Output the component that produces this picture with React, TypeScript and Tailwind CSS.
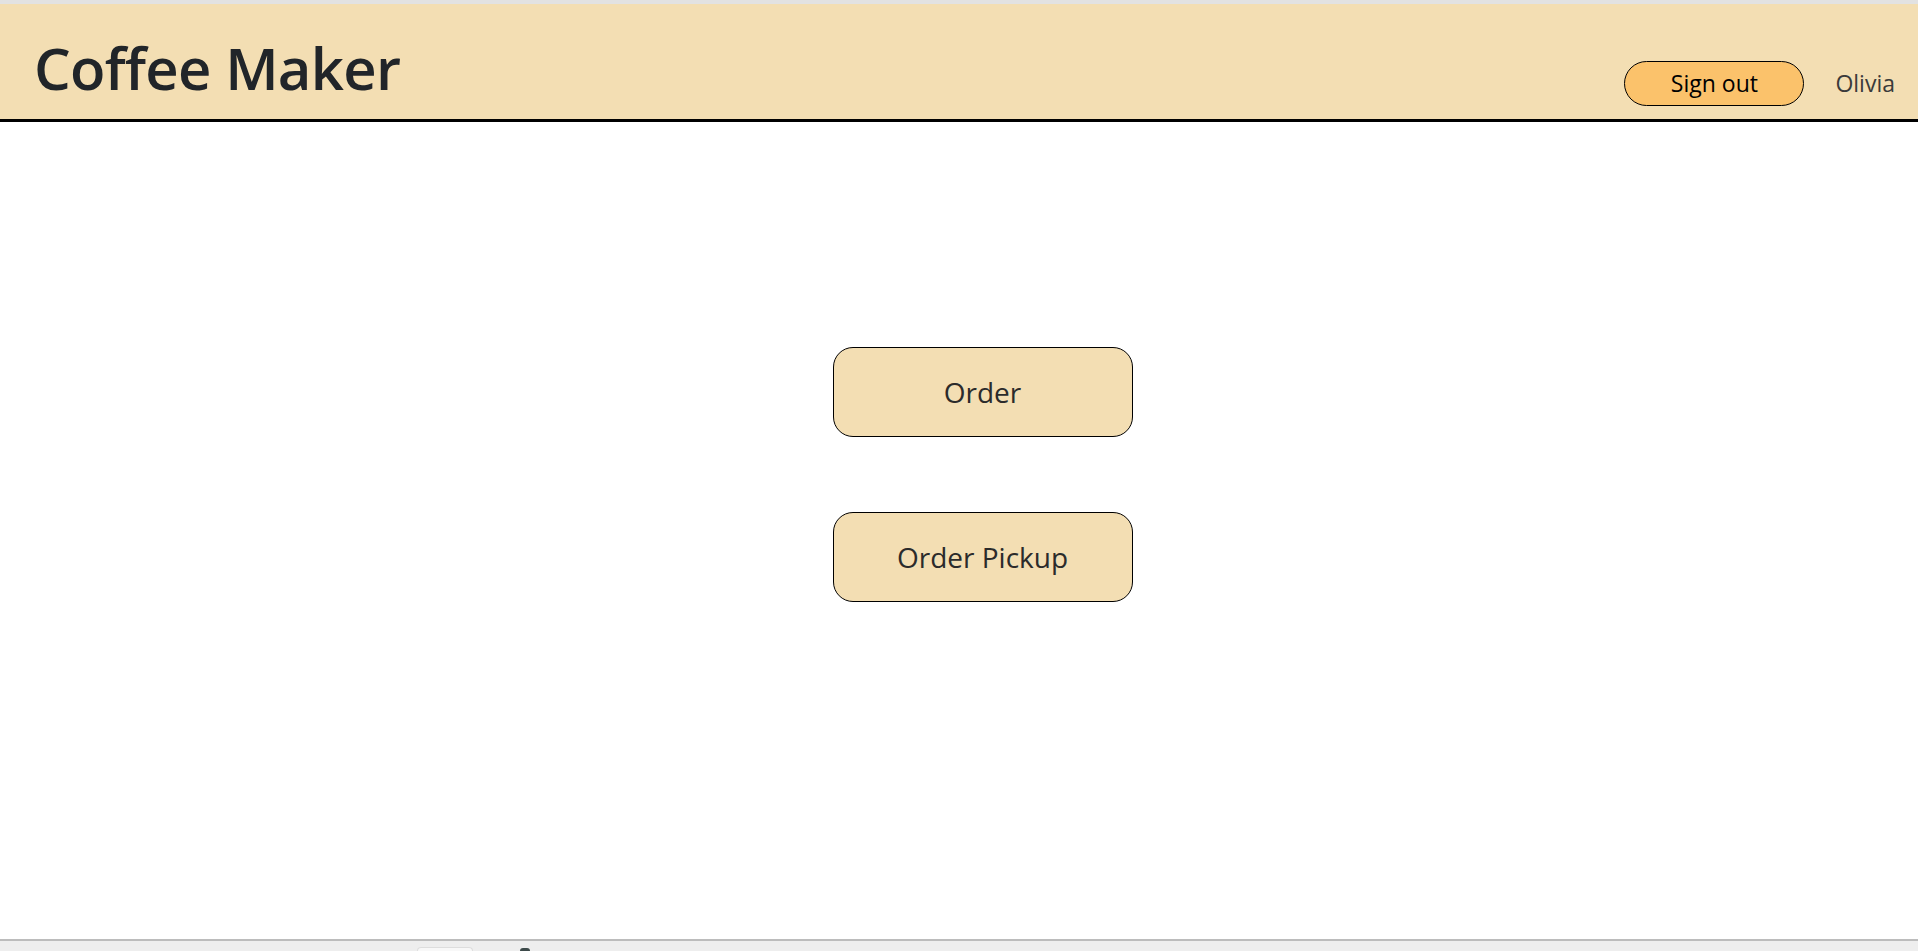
const font = { fontFamily: '"Open Sans", "Noto Sans", sans-serif' };

export default function App() {
    return (
        <div className="flex flex-col h-[951px] bg-white text-[#212529] overflow-hidden" style={font}>
            <div className="h-[4px] bg-[#e2e2e2] shrink-0" />

            {/* Top bar */}
            <header className="h-[118px] shrink-0 bg-[#f3deb3] border-b-[3px] border-black flex justify-between items-start pl-[34px] pr-[23px]">
                <h1 className="mt-[35px] text-[58px] leading-none font-semibold tracking-[-0.7px]">Coffee Maker</h1>
                <div className="mt-[57px] flex items-center gap-[31px]">
                    <button className="w-[180px] h-[45px] rounded-full border border-black bg-[#fbc26b] text-[23px] text-black leading-none">
                        Sign out
                    </button>
                    <span className="text-[23px] text-[#3a3a3a]">Olivia</span>
                </div>
            </header>

            {/* Main actions */}
            <main className="flex-grow flex flex-col items-center pt-[225px] gap-[75px] ml-[47px]">
                <button className="w-[300px] h-[90px] rounded-[20px] border border-black bg-[#f3deb3] text-[28px] text-[#2b2b2b]">
                    Order
                </button>
                <button className="w-[300px] h-[90px] rounded-[20px] border border-black bg-[#f3deb3] text-[28px] text-[#2b2b2b]">
                    Order Pickup
                </button>
            </main>

            {/* cut-off strip at the bottom */}
            <div className="h-[12px] shrink-0 border-t-2 border-[#bcbcbc] bg-[#eeeeee] flex items-end pl-[417px] gap-[47px]">
                <div className="w-[56px] h-[4px] rounded-t-[4px] bg-[#f8f8f8] border border-b-0 border-[#dddddd]" />
                <div className="w-[10px] h-[3px] rounded-t-full bg-[#3d4a4a]" />
            </div>
        </div>
    );
}
